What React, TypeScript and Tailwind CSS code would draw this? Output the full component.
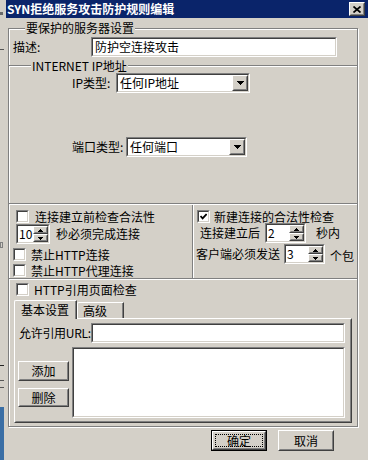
import React from "react";

type Box = { className?: string; inner?: string; children?: React.ReactNode };

// 凹陷边框（输入框、复选框）
function Sunken({ className = "", inner = "", children }: Box) {
  return (
    <div className={`border border-t-[#808080] border-l-[#808080] border-r-white border-b-white ${className}`}>
      <div className={`h-full w-full border border-t-[#404040] border-l-[#404040] border-r-[#d4d0c8] border-b-[#d4d0c8] bg-white ${inner}`}>
        {children}
      </div>
    </div>
  );
}

// 凸起边框（按钮）
function Raised({ className = "", inner = "", children }: Box) {
  return (
    <div className={`border border-t-white border-l-white border-r-[#404040] border-b-[#404040] bg-[#d4d0c8] ${className}`}>
      <div className={`h-full w-full border border-t-[#d4d0c8] border-l-[#d4d0c8] border-r-[#808080] border-b-[#808080] ${inner}`}>
        {children}
      </div>
    </div>
  );
}

function Tri({ up = false }: { up?: boolean }) {
  return (
    <svg width="5" height="3" viewBox="0 0 5 3" shapeRendering="crispEdges">
      <polygon points={up ? "2.5,0 5,3 0,3" : "0,0 5,0 2.5,3"} fill="#000" />
    </svg>
  );
}

function Check({ checked = false }: { checked?: boolean }) {
  return (
    <Sunken className="w-[13px] h-[13px] shrink-0" inner="flex items-center justify-center">
      {checked && (
        <svg width="7" height="7" viewBox="0 0 7 7">
          <path d="M0.5 3 L2.6 5.3 L6.6 1" stroke="#000" strokeWidth="1.8" fill="none" />
        </svg>
      )}
    </Sunken>
  );
}

function Spin({ value, w }: { value: string; w: string }) {
  return (
    <Sunken className={`${w} h-[20px] shrink-0`} inner="flex">
      <span className="flex-1 pl-[1px] leading-[16px]">{value}</span>
      <div className="w-[15px] flex flex-col">
        <Raised className="h-[8px]" inner="flex items-center justify-center">
          <Tri up />
        </Raised>
        <Raised className="h-[8px]" inner="flex items-center justify-center">
          <Tri />
        </Raised>
      </div>
    </Sunken>
  );
}

function Combo({ value, w }: { value: string; w: string }) {
  return (
    <Sunken className={`${w} h-[20px] shrink-0`} inner="flex">
      <span className="flex-1 pl-[2px] leading-[16px]">{value}</span>
      <Raised className="w-[16px] h-full" inner="flex items-center justify-center">
        <svg width="7" height="4" viewBox="0 0 7 4" shapeRendering="crispEdges">
          <polygon points="0,0 7,0 3.5,4" fill="#000" />
        </svg>
      </Raised>
    </Sunken>
  );
}

function HLine({ children }: { children?: React.ReactNode }) {
  return (
    <div className="h-[2px] shrink-0 border-t border-t-[#808080] border-b border-b-white flex items-center">
      {children}
    </div>
  );
}

function LeftStrip() {
  return (
    <div className="w-[6px] shrink-0 flex flex-col bg-[#d4d0c8]">
      <div className="h-[12px]" />
      <div className="w-[3px] h-[3px] bg-[#6a6a6a]" />
      <div className="h-[34px]" />
      <div className="w-[4px] h-[1px] bg-[#555]" />
      <div className="h-[192px]" />
      <div className="w-[3px] h-[6px] border border-[#808080]" />
      <div className="h-[117px]" />
      <div className="w-[4px] h-[1px] bg-[#222]" />
      <div className="h-[14px]" />
      <div className="w-[4px] h-[1px] bg-[#555]" />
      <div className="h-[6px]" />
      <div className="w-[4px] h-[1px] bg-[#555]" />
      <div className="flex-1" />
      <div className="w-[4px] h-[53px] bg-[#3a6ea5]" />
    </div>
  );
}

export default function App() {
  return (
    <div className="w-[368px] h-[460px] flex overflow-hidden whitespace-nowrap bg-[#d4d0c8] text-[12px] leading-[14px] text-black font-['Noto_Sans_CJK_SC','Noto_Sans',sans-serif]">
      <LeftStrip />
      <div className="flex-1 flex flex-col">
        {/* 标题栏 */}
        <div className="h-[18px] shrink-0 bg-[#0a246a] flex items-center pl-[1px] pr-[3px]">
          <span className="font-bold text-white">SYN拒绝服务攻击防护规则编辑</span>
          <Raised className="ml-auto w-[16px] h-[14px]" inner="flex items-center justify-center">
            <svg width="8" height="7" viewBox="0 0 8 7">
              <path d="M0.5 0.5 L7.5 6.5 M7.5 0.5 L0.5 6.5" stroke="#000" strokeWidth="1.7" />
            </svg>
          </Raised>
        </div>

        <div className="pl-[2px] pt-[10px]">
          <div className="relative w-[350px] h-[399px] border border-[#808080] shadow-[inset_1px_1px_0_#fff,1px_1px_0_#fff] flex flex-col">
            <span className="absolute left-[16px] top-[-8px] px-[1px] bg-[#d4d0c8]">要保护的服务器设置</span>

            {/* 描述 */}
            <div className="h-[36px] shrink-0 pt-[8px]">
              <div className="flex items-center h-[20px] pl-[4px]">
                <span className="w-[78px] shrink-0">描述:</span>
                <Sunken className="w-[246px] h-[20px]" inner="pl-[2px] leading-[16px]">
                  防护空连接攻击
                </Sunken>
              </div>
            </div>

            <HLine>
              <span className="ml-[22px] px-[1px] bg-[#d4d0c8]">INTERNET IP地址</span>
            </HLine>

            {/* IP 设置 */}
            <div className="h-[136px] shrink-0 pt-[6px]">
              <div className="flex items-center h-[20px] ml-[63px]">
                <span className="w-[44px] shrink-0">IP类型:</span>
                <Combo value="任何IP地址" w="w-[134px]" />
              </div>
              <div className="flex items-center h-[20px] ml-[63px] mt-[44px]">
                <span className="w-[54px] shrink-0">端口类型:</span>
                <Combo value="任何端口" w="w-[121px]" />
              </div>
            </div>

            <HLine />

            {/* 连接检查 */}
            <div className="h-[73px] shrink-0 flex">
              <div className="w-[183px] shrink-0 flex flex-col">
                <div className="flex items-center h-[13px] mt-[5px] ml-[7px] gap-[6px]">
                  <Check />
                  <span>连接建立前检查合法性</span>
                </div>
                <div className="flex items-center h-[20px] mt-[1px] ml-[7px] gap-[6px]">
                  <Spin value="10" w="w-[34px]" />
                  <span>秒必须完成连接</span>
                </div>
                <div className="flex items-center h-[13px] mt-[4px] ml-[4px] gap-[5px]">
                  <Check />
                  <span>禁止HTTP连接</span>
                </div>
                <div className="flex items-center h-[13px] mt-[3px] ml-[4px] gap-[5px]">
                  <Check />
                  <span>禁止HTTP代理连接</span>
                </div>
              </div>
              <div className="w-[2px] shrink-0 border-l border-l-[#808080] border-r border-r-white" />
              <div className="flex-1 flex flex-col">
                <div className="flex items-center h-[13px] mt-[5px] ml-[3px] gap-[4px]">
                  <Check checked />
                  <span>新建连接的合法性检查</span>
                </div>
                <div className="flex items-center h-[20px] ml-[6px]">
                  <span className="w-[60px] shrink-0">连接建立后</span>
                  <Spin value="2" w="w-[41px] ml-[5px]" />
                  <span className="ml-[10px]">秒内</span>
                </div>
                <div className="flex items-center h-[20px] mt-[1px] ml-[2px]">
                  <span className="w-[84px] shrink-0">客户端必须发送</span>
                  <Spin value="3" w="w-[41px] ml-[4px]" />
                  <span className="ml-[5px] mt-[4px]">个包</span>
                </div>
              </div>
            </div>

            <HLine />

            {/* HTTP 引用检查 */}
            <div className="flex-1 flex flex-col">
              <div className="flex items-center h-[13px] mt-[3px] ml-[7px] gap-[5px]">
                <Check />
                <span>HTTP引用页面检查</span>
              </div>
              <div className="flex h-[18px] mt-[4px] ml-[5px]">
                <div className="relative z-10 self-start w-[63px] h-[19px] bg-[#d4d0c8] border-t border-l border-r border-t-white border-l-white border-r-[#404040] rounded-tl-[2px]">
                  <div className="h-full border-r border-r-[#808080] flex items-center justify-center pb-[1px]">基本设置</div>
                </div>
                <div className="self-end w-[47px] h-[16px] border-t border-l border-r border-t-white border-l-white border-r-[#404040] rounded-tl-[2px]">
                  <div className="h-full border-r border-r-[#808080] flex items-center pl-[5px]">高级</div>
                </div>
              </div>
              <Raised className="ml-[5px] w-[338px] h-[105px]" inner="flex flex-col">
                <div className="flex items-center h-[20px] mt-[3px]">
                  <span className="w-[75px] shrink-0 pl-[3px] tracking-[-0.3px]">允许引用URL:</span>
                  <Sunken className="w-[254px] h-[20px] shrink-0" />
                </div>
                <div className="flex mt-[4px]">
                  <div className="w-[51px] shrink-0 ml-[2px] flex flex-col">
                    <Raised className="h-[20px] mt-[14px]" inner="flex items-center justify-center">添加</Raised>
                    <Raised className="h-[19px] mt-[7px]" inner="flex items-center justify-center">删除</Raised>
                  </div>
                  <Sunken className="ml-[3px] w-[273px] h-[71px] shrink-0" />
                </div>
              </Raised>
            </div>
          </div>

          {/* 底部按钮 */}
          <div className="flex mt-[3px] ml-[203px] gap-[11px]">
            <div className="w-[56px] h-[21px] border border-black">
              <Raised className="w-full h-full" inner="p-[1px]">
                <div className="w-full h-full border border-dotted border-black flex items-center justify-center">确定</div>
              </Raised>
            </div>
            <Raised className="w-[56px] h-[21px]" inner="flex items-center justify-center">取消</Raised>
          </div>
        </div>
      </div>
    </div>
  );
}
